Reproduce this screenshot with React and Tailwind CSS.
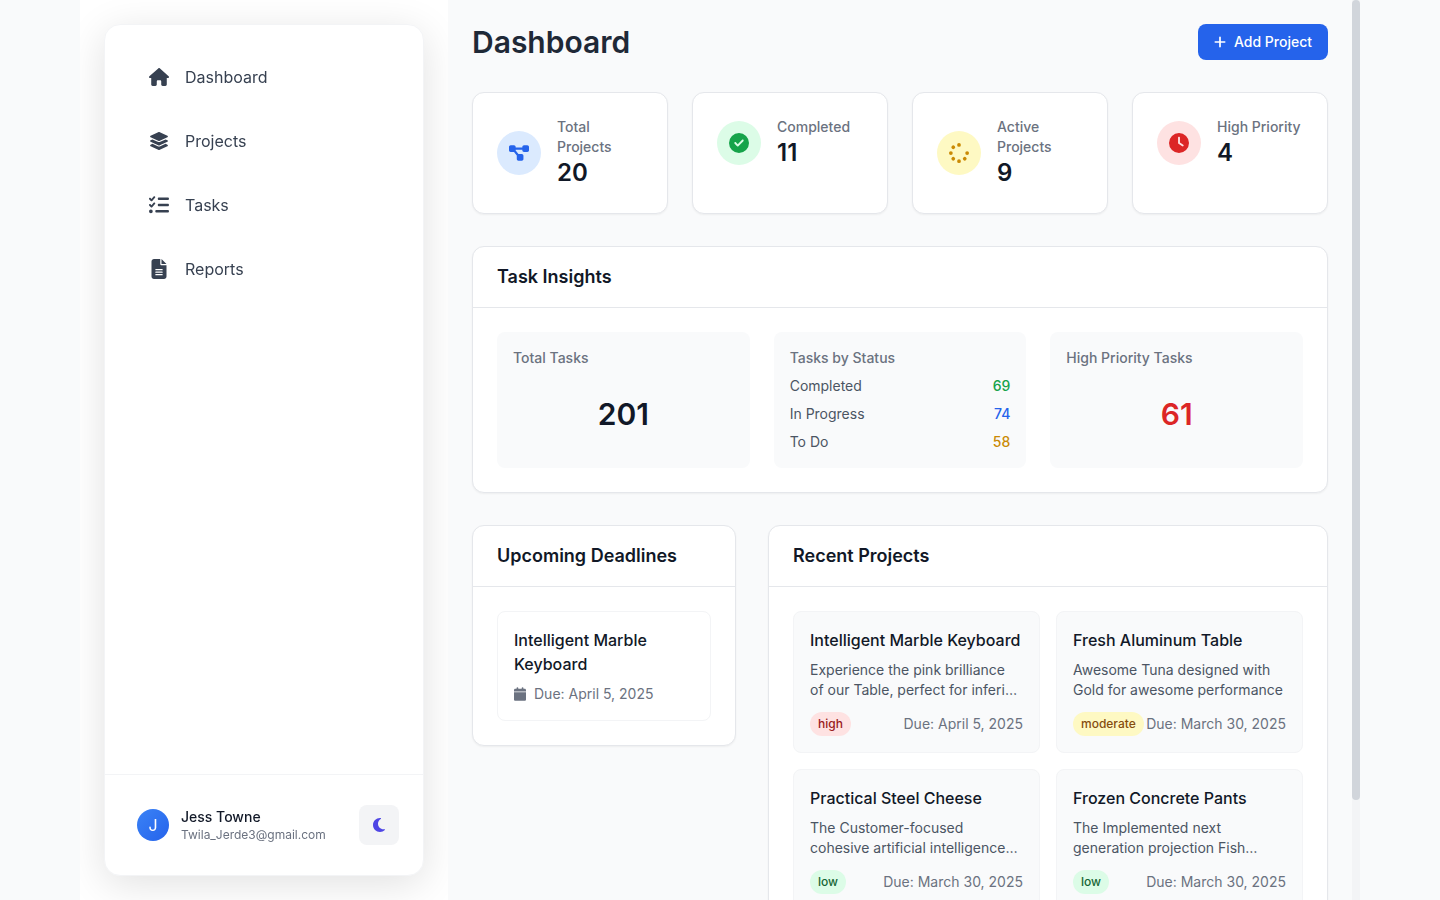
import { useLayoutEffect, useRef, useState } from "react";
import {
  FaHouse,
  FaLayerGroup,
  FaListCheck,
  FaFileLines,
  FaDiagramProject,
  FaCircleCheck,
  FaSpinner,
  FaClock,
  FaPlus,
  FaMoon,
  FaCalendar,
} from "react-icons/fa6";

const navItems = [
  { label: "Dashboard", icon: FaHouse },
  { label: "Projects", icon: FaLayerGroup },
  { label: "Tasks", icon: FaListCheck },
  { label: "Reports", icon: FaFileLines },
];

const stats = [
  { label: "Total Projects", value: 20, icon: FaDiagramProject, tone: "bg-[#dbeafe] text-[#2563eb]" },
  { label: "Completed", value: 11, icon: FaCircleCheck, tone: "bg-[#dcfce7] text-[#16a34a]" },
  { label: "Active Projects", value: 9, icon: FaSpinner, tone: "bg-[#fef9c3] text-[#ca8a04]" },
  { label: "High Priority", value: 4, icon: FaClock, tone: "bg-[#fee2e2] text-[#dc2626]" },
];

const statuses = [
  { label: "Completed", value: 69, color: "text-[#16a34a]" },
  { label: "In Progress", value: 74, color: "text-[#2563eb]" },
  { label: "To Do", value: 58, color: "text-[#ca8a04]" },
];

const priorityTone = {
  high: "bg-[#fee2e2] text-[#991b1b]",
  moderate: "bg-[#fef9c3] text-[#854d0e]",
  low: "bg-[#dcfce7] text-[#166534]",
};

const projects = [
  {
    name: "Intelligent Marble Keyboard",
    description: "Experience the pink brilliance of\u00a0our Table, perfect for inferi…",
    priority: "high",
    due: "April 5, 2025",
  },
  {
    name: "Fresh Aluminum Table",
    description: "Awesome Tuna designed with Gold for awesome performance",
    priority: "moderate",
    due: "March 30, 2025",
  },
  {
    name: "Practical Steel Cheese",
    description: "The Customer-focused cohesive artificial intelligence…",
    priority: "low",
    due: "March 30, 2025",
  },
  {
    name: "Frozen Concrete Pants",
    description: "The Implemented next generation projection Fish…",
    priority: "low",
    due: "March 30, 2025",
  },
];

function Sidebar() {
  return (
    <aside className="shrink-0 overflow-hidden bg-white p-6">
      <div className="flex h-full w-80 flex-col rounded-2xl border border-[#f3f4f6] bg-white shadow-[0_8px_40px_rgb(0,0,0,0.12)] will-change-transform">
        <nav className="flex-1 space-y-2 p-6">
          {navItems.map(({ label, icon: Icon }) => (
            <a key={label} href="#" className="flex items-center gap-4 rounded-xl px-5 py-4 text-[#374151]">
              <Icon className="size-5" />
              <span>{label}</span>
            </a>
          ))}
        </nav>
        <div className="flex items-center justify-between border-t border-[#f3f4f6] p-6">
          <a href="#" className="flex items-center gap-3 p-2">
            <span className="flex size-8 items-center justify-center rounded-full bg-linear-to-br from-[#3b82f6] to-[#2563eb] text-white">
              J
            </span>
            <span className="flex flex-col">
              <span className="text-sm font-medium text-[#111827]">Jess Towne</span>
              <span className="text-xs text-[#6b7280]">Twila_Jerde3@gmail.com</span>
            </span>
          </a>
          <button
            type="button"
            aria-label="Toggle dark mode"
            className="flex size-10 items-center justify-center rounded-lg bg-[#f3f4f6] text-[#4f46e5]"
          >
            <FaMoon className="size-4" />
          </button>
        </div>
      </div>
    </aside>
  );
}

function StatCard({ label, value, icon: Icon, tone }) {
  return (
    <div className="rounded-xl border border-[#e5e7eb] bg-white p-6 shadow-xs">
      <div className="flex items-center gap-4">
        <div className={`shrink-0 rounded-full p-3 ${tone}`}>
          <Icon className="size-5" />
        </div>
        <div>
          <p className="text-sm font-medium text-[#6b7280]">{label}</p>
          <p className="text-2xl font-semibold text-[#111827]">{value}</p>
        </div>
      </div>
    </div>
  );
}

function Panel({ title, className = "", children }) {
  return (
    <section className={`rounded-xl border border-[#e5e7eb] bg-white shadow-xs ${className}`}>
      <div className="border-b border-[#e5e7eb] px-6 py-4">
        <h2 className="text-lg font-semibold text-[#111827]">{title}</h2>
      </div>
      <div className="p-6">{children}</div>
    </section>
  );
}

function InsightBox({ title, children }) {
  return (
    <div className="flex flex-col gap-2 rounded-lg bg-[#f9fafb] p-4">
      <h3 className="text-sm font-medium text-[#6b7280]">{title}</h3>
      {children}
    </div>
  );
}

function ProjectCard({ name, description, priority, due }) {
  return (
    <article className="rounded-lg border border-[#f3f4f6] bg-[#f9fafb] p-4">
      <h3 className="truncate font-medium text-[#111827]">{name}</h3>
      <p className="mt-2 line-clamp-2 text-sm text-[#4b5563]">{description}</p>
      <div className="mt-3 flex items-center justify-between">
        <span className={`rounded-full px-2 py-1 text-xs font-medium ${priorityTone[priority]}`}>{priority}</span>
        <span className="whitespace-nowrap text-sm text-[#6b7280]">Due: {due}</span>
      </div>
    </article>
  );
}

function ScrollArea({ children }) {
  const viewport = useRef(null);
  const [thumb, setThumb] = useState({ size: 0, offset: 0 });

  const measure = () => {
    const { clientHeight, scrollHeight, scrollTop } = viewport.current;
    setThumb({ size: (clientHeight / scrollHeight) * 100, offset: (scrollTop / scrollHeight) * 100 });
  };

  useLayoutEffect(() => {
    measure();
    window.addEventListener("resize", measure);
    return () => window.removeEventListener("resize", measure);
  }, []);

  return (
    <div className="flex min-w-0 flex-1">
      <main
        ref={viewport}
        onScroll={measure}
        className="min-w-0 flex-1 overflow-y-auto px-6 pt-6 pb-19 [scrollbar-width:none]"
      >
        {children}
      </main>
      <div className="w-2 shrink-0 bg-[#f3f4f6]" aria-hidden="true">
        <div style={{ height: `${thumb.offset}%` }} />
        <div className="rounded-full bg-[#d1d5db]" style={{ height: `${thumb.size}%` }} />
      </div>
    </div>
  );
}

export default function App() {
  return (
    <div className="h-screen bg-[#f9fafb] font-['Inter',sans-serif]">
      <div className="mx-auto flex h-full max-w-7xl">
        <Sidebar />
        <ScrollArea>
          <div className="space-y-8">
            <header className="flex items-center justify-between">
              <h1 className="text-3xl leading-9 font-semibold text-[#1f2937]">Dashboard</h1>
              <button
                type="button"
                className="flex items-center gap-2 rounded-lg bg-[#2563eb] px-4 py-2 text-sm font-medium text-white"
              >
                <FaPlus className="h-3.5 w-3" />
                Add Project
              </button>
            </header>

            <div className="grid grid-cols-4 gap-6">
              {stats.map((stat) => (
                <StatCard key={stat.label} {...stat} />
              ))}
            </div>

            <Panel title="Task Insights">
              <div className="grid grid-cols-3 gap-6">
                <InsightBox title="Total Tasks">
                  <p className="flex flex-1 items-center justify-center text-3xl font-semibold text-[#111827]">201</p>
                </InsightBox>
                <InsightBox title="Tasks by Status">
                  <dl className="space-y-2 text-sm">
                    {statuses.map(({ label, value, color }) => (
                      <div key={label} className="flex justify-between">
                        <dt className="text-[#4b5563]">{label}</dt>
                        <dd className={`font-medium ${color}`}>{value}</dd>
                      </div>
                    ))}
                  </dl>
                </InsightBox>
                <InsightBox title="High Priority Tasks">
                  <p className="flex flex-1 items-center justify-center text-3xl font-semibold text-[#dc2626]">61</p>
                </InsightBox>
              </div>
            </Panel>

            <div className="grid grid-cols-3 items-start gap-8">
              <Panel title="Upcoming Deadlines">
                <article className="rounded-lg border border-[#f3f4f6] p-4">
                  <h3 className="font-medium text-[#111827]">Intelligent Marble Keyboard</h3>
                  <p className="mt-2 flex items-center gap-2 text-sm text-[#6b7280]">
                    <FaCalendar className="h-3.5 w-3" />
                    Due: April 5, 2025
                  </p>
                </article>
              </Panel>
              <Panel title="Recent Projects" className="col-span-2">
                <div className="grid grid-cols-2 gap-4">
                  {projects.map((project) => (
                    <ProjectCard key={project.name} {...project} />
                  ))}
                </div>
              </Panel>
            </div>
          </div>
        </ScrollArea>
      </div>
    </div>
  );
}
